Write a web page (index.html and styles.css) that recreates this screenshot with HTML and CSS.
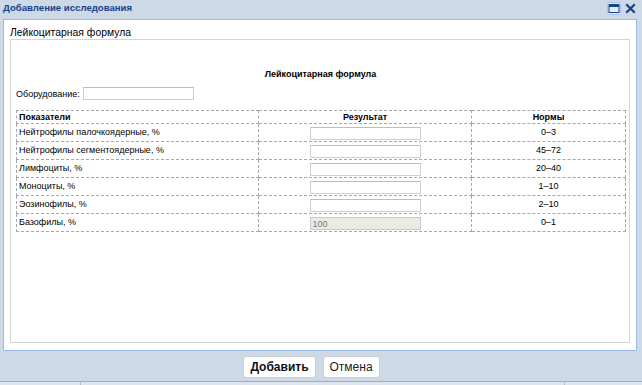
FILE: index.html
```html
<!DOCTYPE html>
<html lang="ru">
<head>
<meta charset="utf-8">
<link rel="stylesheet" href="styles.css">
</head>
<body>
<div class="window">
  <div class="titlebar">
    <span class="title">Добавление исследования</span>
    <div class="tools">
      <span class="tool tool-max">
        <svg width="14" height="13" viewBox="0 0 14 13"><rect x="2" y="2.5" width="10" height="8" fill="none" stroke="#15428b" stroke-width="1"/><rect x="2" y="2" width="10" height="3" fill="#15428b"/></svg>
      </span>
      <span class="tool tool-close">
        <svg width="11" height="11" viewBox="0 0 11 11"><path d="M2 2 L9 9 M9 2 L2 9" stroke="#15428b" stroke-width="2.2" stroke-linecap="square"/></svg>
      </span>
    </div>
  </div>
  <div class="panel">
    <div class="panel-label">Лейкоцитарная формула</div>
    <div class="fieldbox">
      <div class="heading">Лейкоцитарная формула</div>
      <div class="equip">
        <span>Оборудование:</span>
        <input class="txt equip-input" type="text">
      </div>
      <table class="grid">
        <colgroup><col class="c1"><col class="c2"><col class="c3"></colgroup>
        <thead>
          <tr><th class="left">Показатели</th><th>Результат</th><th>Нормы</th></tr>
        </thead>
        <tbody>
          <tr><td>Нейтрофилы палочкоядерные, %</td><td class="mid"><input class="txt res" type="text"></td><td class="mid">0–3</td></tr>
          <tr><td>Нейтрофилы сегментоядерные, %</td><td class="mid"><input class="txt res" type="text"></td><td class="mid">45–72</td></tr>
          <tr><td>Лимфоциты, %</td><td class="mid"><input class="txt res" type="text"></td><td class="mid">20–40</td></tr>
          <tr><td>Моноциты, %</td><td class="mid"><input class="txt res" type="text"></td><td class="mid">1–10</td></tr>
          <tr><td>Эозинофилы, %</td><td class="mid"><input class="txt res" type="text"></td><td class="mid">2–10</td></tr>
          <tr><td>Базофилы, %</td><td class="mid"><input class="txt res" type="text" value="100" disabled></td><td class="mid">0–1</td></tr>
        </tbody>
      </table>
    </div>
  </div>
  <div class="footer">
    <button class="btn btn-primary">Добавить</button>
    <button class="btn">Отмена</button>
  </div>
  <div class="statusbar">
    <span class="seg seg1"></span>
    <span class="seg seg2"></span>
    <span class="seg seg3"></span>
  </div>
</div>
</body>
</html>
```
FILE: styles.css
```css
html, body {
  margin: 0;
  padding: 0;
}
body {
  width: 642px;
  height: 385px;
  overflow: hidden;
  background: #cdd9e7;
  font-family: "Liberation Sans", Arial, sans-serif;
  color: #000;
}
.window {
  display: flex;
  flex-direction: column;
  height: 385px;
}
.titlebar {
  height: 19px;
  display: flex;
  align-items: flex-start;
  justify-content: space-between;
  padding-left: 3px;
  padding-right: 6px;
  box-sizing: border-box;
}
.title {
  font-size: 9.6px;
  font-weight: bold;
  color: #15428b;
  line-height: 13px;
  padding-top: 1px;
}
.tools {
  display: flex;
  align-items: center;
  gap: 4px;
  padding-top: 2px;
}
.tool {
  display: flex;
  align-items: center;
  justify-content: center;
}
.tool-max {
  width: 14px;
  height: 13px;
  background: #e4ecf7;
  border-radius: 2px;
  box-shadow: inset 0 0 0 1px #a9c3e6;
}
.tool-close {
  width: 11px;
  height: 13px;
}
.panel {
  margin: 0 5px 0 3px;
  height: 332px;
  box-sizing: border-box;
  background: #fff;
  border: 1px solid #99bbe8;
  padding: 6px 6px 0 6px;
}
.panel-label {
  font-size: 10.4px;
  line-height: 13px;
}
.fieldbox {
  height: 304px;
  box-sizing: border-box;
  border: 1px solid #d4d4d4;
  padding: 28px 4px 0 5px;
}
.heading {
  font-size: 9px;
  font-weight: bold;
  text-align: center;
  line-height: 12px;
}
.equip {
  display: flex;
  align-items: center;
  margin-top: 7px;
  font-size: 9px;
  gap: 3px;
}
.txt {
  box-sizing: border-box;
  height: 13px;
  border: 1px solid #cfcfcf;
  border-top-color: #bcbcbc;
  background: #fff;
  padding: 0 2px;
  margin: 0;
  font-family: "Liberation Sans", Arial, sans-serif;
  font-size: 9px;
  outline: none;
}
.equip-input {
  width: 111px;
}
.grid {
  margin-top: 10px;
  width: 609px;
  border-collapse: collapse;
  font-size: 9px;
  table-layout: fixed;
}
.c1 { width: 242px; }
.c2 { width: 213px; }
.c3 { width: 154px; }
.grid th, .grid td {
  border: 1px dashed #a8a8a8;
  padding: 0 2px;
  vertical-align: top;
}
.grid th {
  line-height: 12px;
  font-weight: bold;
  text-align: center;
}
.grid th.left {
  text-align: left;
}
.grid td {
  line-height: 13px;
  height: 18px;
  box-sizing: border-box;
  padding-top: 2px;
}
.grid td.mid {
  text-align: center;
}
.res {
  width: 111px;
  display: block;
  margin: 1px auto 0;
}
.res:disabled {
  background: #ebebe4;
  color: #777;
  border-color: #c8c8c8;
}
.footer {
  height: 30px;
  box-sizing: border-box;
  padding-top: 2px;
  display: flex;
  align-items: center;
  justify-content: center;
  gap: 7px;
  padding-right: 19px;
}
.btn {
  height: 22px;
  box-sizing: border-box;
  background: #fff;
  border: 1px solid #d0d0d0;
  border-radius: 3px;
  font-family: "Liberation Sans", Arial, sans-serif;
  font-size: 12px;
  padding: 0 6px;
  color: #222;
}
.btn-primary {
  font-weight: bold;
  color: #111;
}
.statusbar {
  flex: 1;
  display: flex;
  border-top: 1px solid #a5adb7;
  background: #dfe5ec;
}
.seg {
  display: block;
}
.seg1 { width: 80px; border-right: 1px solid #b5bcc5; }
.seg2 { width: 483px; border-right: 1px solid #b5bcc5; }
.seg3 { flex: 1; }
```
